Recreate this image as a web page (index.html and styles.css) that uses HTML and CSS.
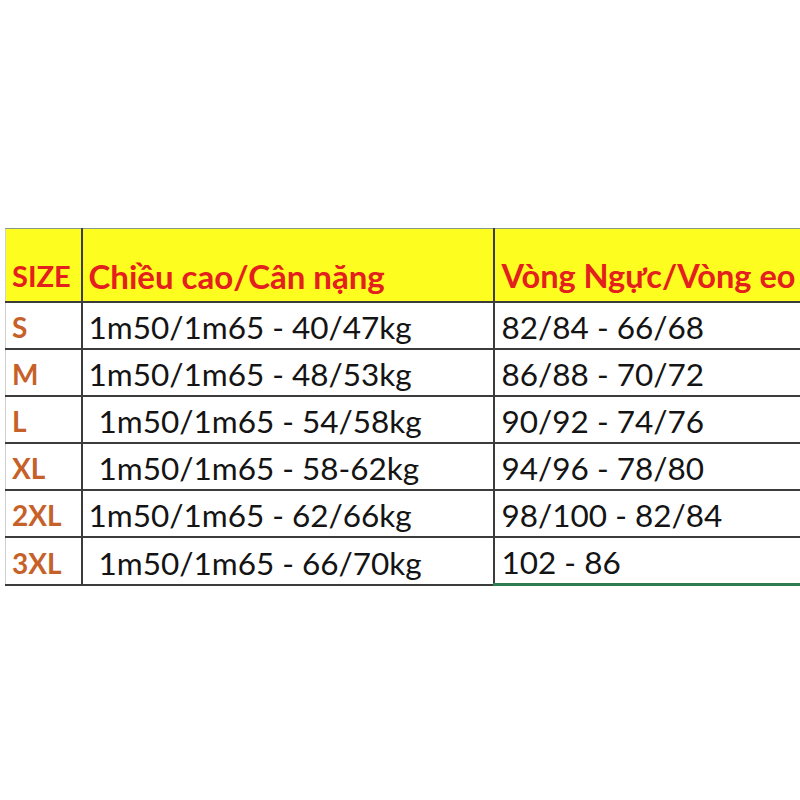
FILE: index.html
```html
<!DOCTYPE html>
<html lang="vi">
<head>
<meta charset="utf-8">
<link rel="stylesheet" href="styles.css">
</head>
<body>
<div class="sheet">
  <table class="size-table">
    <colgroup>
      <col class="c1"><col class="c2"><col class="c3">
    </colgroup>
    <thead>
      <tr class="head">
        <th class="size">SIZE</th>
        <th>Chiều cao/Cân nặng</th>
        <th>Vòng Ngực/Vòng eo</th>
      </tr>
    </thead>
    <tbody>
      <tr><td class="size">S</td><td>1m50/1m65 - 40/47kg</td><td>82/84 - 66/68</td></tr>
      <tr><td class="size">M</td><td>1m50/1m65 - 48/53kg</td><td>86/88 - 70/72</td></tr>
      <tr><td class="size">L</td><td class="ind">1m50/1m65 - 54/58kg</td><td>90/92 - 74/76</td></tr>
      <tr><td class="size">XL</td><td class="ind">1m50/1m65 - 58-62kg</td><td>94/96 - 78/80</td></tr>
      <tr><td class="size">2XL</td><td>1m50/1m65 - 62/66kg</td><td>98/100 - 82/84</td></tr>
      <tr class="last"><td class="size">3XL</td><td class="ind">1m50/1m65 - 66/70kg</td><td>102 - 86</td></tr>
    </tbody>
  </table>
</div>
</body>
</html>
```
FILE: styles.css
```css
html, body {
  margin: 0;
  padding: 0;
  background: #ffffff;
  width: 800px;
  height: 800px;
  overflow: hidden;
}
.sheet {
  padding-top: 228px;
  padding-left: 5px;
}
.size-table {
  border-collapse: collapse;
  table-layout: fixed;
  width: 800px;
  font-family: Lato, "Open Sans", sans-serif;
  color: #141414;
}
.c1 { width: 76px; }
.c2 { width: 412px; }
.c3 { width: 312px; }
.size-table th,
.size-table td {
  padding: 0 0 4px 5px;
  vertical-align: bottom;
  text-align: left;
  white-space: nowrap;
  overflow: hidden;
  border: 2px solid #3c3c3c;
  border-top: 0;
  line-height: 1.1;
}
.size-table td:first-child,
.size-table th:first-child {
  border-left: 1px solid #cfcfcf;
  padding-left: 6px;
}
.size-table td:nth-child(2),
.size-table th:nth-child(2) {
  padding-left: 6px;
}
.size-table td:nth-child(3),
.size-table th:nth-child(3) {
  padding-left: 7px;
}
.head th {
  height: 65px;
  background: #fdfd20;
  color: #e3201e;
  font-weight: 700;
  font-size: 33px;
  border-top: 1px solid #8a9a8a;
  padding-bottom: 7px;
}
.head th:nth-child(3) {
  font-size: 32.5px;
}
.head th.size {
  height: 63px;
  font-size: 29px;
  padding-bottom: 9px;
}
.size-table td {
  height: 42px;
  font-size: 31.5px;
  font-weight: 400;
  padding-bottom: 3px;
}
.size-table td.size {
  height: 40px;
  color: #c6612a;
  font-weight: 700;
  font-size: 28px;
  padding-bottom: 5px;
}
.size-table td.ind {
  padding-left: 16px;
}
.last td:nth-child(3) {
  border-bottom: 3px solid #2e7d52;
}
```
